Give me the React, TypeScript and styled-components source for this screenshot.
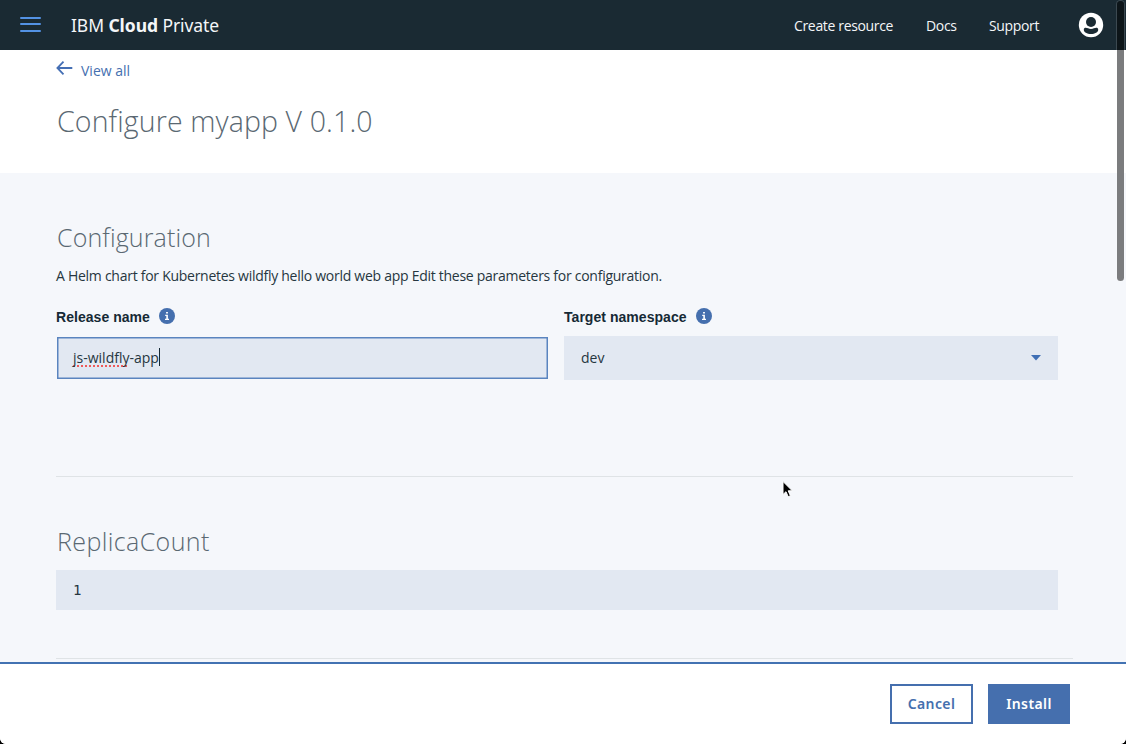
import React from 'react';
import styled, { createGlobalStyle } from 'styled-components';

const GlobalStyle = createGlobalStyle`
  * { box-sizing: border-box; }
  html, body { margin: 0; background: #000; overflow: hidden; }
  body { font-family: 'Open Sans', 'Noto Sans', sans-serif; font-size: 14px; color: #263640; }
  h1, h2, p { margin: 0; }
`;

const Page = styled.div`
  position: relative;
  display: flex;
  flex-direction: column;
  width: 1126px;
  height: 744px;
  overflow: hidden;
  background: #fff;
  border-radius: 0 0 6px 6px;
`;

const Header = styled.header`
  display: flex;
  align-items: center;
  flex: 0 0 50px;
  padding: 0 22px 0 20px;
  background: #1a2a33;
  color: #f4f6f8;
`;

const MenuButton = styled.div`
  width: 21px;
  height: 15px;
  margin: 0 30px 2px 0;
  display: flex;
  flex-direction: column;
  justify-content: space-between;
`;

const MenuBar = styled.span`
  height: 2px;
  border-radius: 1px;
  background: #5392e4;
`;

const Brand = styled.div`
  flex: 1;
  font-family: 'Noto Sans', sans-serif;
  font-size: 17.5px;
  white-space: pre;
  letter-spacing: -0.07px;
  b { font-weight: 700; }
`;

const Nav = styled.nav`
  display: flex;
  align-items: center;
`;

const NavLink = styled.a<{ $width: number; $gap: number }>`
  width: ${(p) => p.$width}px;
  margin-right: ${(p) => p.$gap}px;
  white-space: nowrap;
  font-size: 14px;
  letter-spacing: -0.34px;
`;

const TitleBand = styled.section`
  flex: 0 0 123px;
  padding: 10px 56px 0;
`;

const BackLink = styled.a`
  display: flex;
  align-items: center;
  height: 20px;
  gap: 8px;
  color: #4570b0;
  font-size: 14px;
  svg { margin-top: -4px; }
`;

const PageTitle = styled.h1`
  margin-top: 21px;
  padding-left: 1px;
  font-size: 28.5px;
  line-height: 40px;
  font-weight: 300;
  letter-spacing: 0.12px;
  color: #5a6872;
  white-space: nowrap;
`;

const Content = styled.main`
  flex: 1;
  min-height: 0;
  padding: 44px 53px 0 56px;
  background: #f5f7fb;
`;

const Section = styled.section<{ $height: number; $top: number }>`
  height: ${(p) => p.$height}px;
  padding-top: ${(p) => p.$top}px;
  border-bottom: 1px solid #dfe3e6;
`;

const SectionTitle = styled.h2<{ $spacing: number }>`
  padding-left: 1px;
  font-size: 25px;
  line-height: 40px;
  font-weight: 300;
  letter-spacing: ${(p) => p.$spacing}px;
  color: #5a6872;
`;

const Description = styled.p`
  margin-top: 9px;
  line-height: 20px;
  font-size: 14px;
  letter-spacing: -0.27px;
  white-space: nowrap;
`;

const Fields = styled.div`
  display: grid;
  grid-template-columns: 492px 494px;
  column-gap: 16px;
  margin-top: 21px;
`;

const Field = styled.div`
  display: flex;
  flex-direction: column;
`;

const Label = styled.label`
  display: flex;
  align-items: center;
  gap: 9px;
  height: 20px;
  margin-bottom: 9px;
  font-family: 'Liberation Sans', Arial, sans-serif;
  font-weight: 700;
  font-size: 14px;
  letter-spacing: 0.04px;
  color: #152935;
  svg { margin-top: -2px; }
`;

const TextBox = styled.div<{ $height: number }>`
  display: flex;
  align-items: center;
  height: ${(p) => p.$height}px;
  padding: 0 17px;
  background: #e2e8f2;
`;

const FocusedBox = styled(TextBox)`
  margin: 1px 0 0 1px;
  padding: 0 15px 2px;
  border: 1px solid #5a84bf;
  box-shadow: inset 0 0 0 0.5px #5a84bf;
`;

const ReplicaBox = styled(TextBox)`
  width: 1002px;
  margin-top: 9px;
  font-family: 'DejaVu Sans Mono', monospace;
`;

const Misspelled = styled.span`
  text-decoration: underline dotted #ee5a5a 2px;
  text-underline-offset: 3px;
  text-decoration-skip-ink: none;
`;

const Caret = styled.span`
  width: 1px;
  height: 18px;
  background: #152935;
`;

const SelectValue = styled.span`
  flex: 1;
  margin-top: -1px;
`;

const Footer = styled.footer`
  display: flex;
  flex: 0 0 82px;
  justify-content: flex-end;
  gap: 15px;
  padding: 20px 56px 0 0;
  background: #fff;
  border-top: 2px solid #4272b2;
`;

const Button = styled.button<{ $primary?: boolean; $width: number }>`
  width: ${(p) => p.$width}px;
  height: 40px;
  padding: 0 0 1px;
  border: 2px solid #456fae;
  background: ${(p) => (p.$primary ? '#456fae' : '#fff')};
  color: ${(p) => (p.$primary ? '#fff' : '#456fae')};
  font-family: 'Noto Sans', sans-serif;
  font-weight: 600;
  font-size: 14px;
  letter-spacing: 0.4px;
`;

const ScrollThumb = styled.div`
  position: absolute;
  top: 1px;
  right: 2px;
  width: 7px;
  height: 280px;
  border-radius: 4px;
  background: linear-gradient(#0d1519 49px, #7b7c7e 49px);
  box-shadow: 0 0 0 1px rgba(255, 255, 255, 0.15);
`;

const Pointer = styled.svg`
  position: absolute;
  left: 781px;
  top: 480px;
`;

const InfoIcon = () => (
  <svg width="16" height="16" viewBox="0 0 16 16">
    <circle cx="8" cy="8" r="8" fill="#456fae" />
    <path d="M6.2 6.8h2.7v4h1.1v1.1H6v-1.1h1.3V7.9H6.2zM7.1 4h1.8v1.6H7.1z" fill="#fff" />
  </svg>
);

export default function App() {
  return (
    <Page>
      <GlobalStyle />
      <Header>
        <MenuButton><MenuBar /><MenuBar /><MenuBar /></MenuButton>
        <Brand>IBM <b>Cloud</b> Private</Brand>
        <Nav>
          <NavLink $width={100} $gap={32}>Create resource</NavLink>
          <NavLink $width={31} $gap={32}>Docs</NavLink>
          <NavLink $width={51} $gap={38}>Support</NavLink>
          <svg width="26" height="26" viewBox="0 0 26 26">
            <circle cx="13" cy="13" r="12.2" fill="#fff" />
            <circle cx="13" cy="10" r="5" fill="#1a2a33" />
            <path d="M5.800 17.800c0-1.400.8-2 2-2 1.700 0 2.700 1.100 5.200 1.100s3.500-1.100 5.200-1.100c1.200 0 2 .6 2 2 0 2.600-3.200 4.200-7.200 4.200s-7.200-1.600-7.200-4.200z" fill="#1a2a33" />
          </svg>
        </Nav>
      </Header>
      <TitleBand>
        <BackLink>
          <svg width="17" height="14" viewBox="0 0 17 14" fill="none" stroke="#456fb4" strokeWidth="1.800">
            <path d="M16.300 7H1.400M7.500 0.700L1.400 7l6.100 6.300" />
          </svg>
          View all
        </BackLink>
        <PageTitle>Configure myapp V 0.1.0</PageTitle>
      </TitleBand>
      <Content>
        <Section $height={260} $top={0}>
          <SectionTitle $spacing={0.13}>Configuration</SectionTitle>
          <Description>A Helm chart for Kubernetes wildfly hello world web app Edit these parameters for configuration.</Description>
          <Fields>
            <Field>
              <Label>Release name <InfoIcon /></Label>
              <FocusedBox $height={42}><span><Misspelled>js-wildfly</Misspelled>-app</span><Caret /></FocusedBox>
            </Field>
            <Field>
              <Label>Target namespace <InfoIcon /></Label>
              <TextBox $height={44}>
                <SelectValue>dev</SelectValue>
                <svg width="10" height="6" viewBox="0 0 10 6"><path d="M0 0h10L5 5.500z" fill="#3f6fb5" /></svg>
              </TextBox>
            </Field>
          </Fields>
        </Section>
        <Section $height={182} $top={44}>
          <SectionTitle $spacing={0.4}>ReplicaCount</SectionTitle>
          <ReplicaBox $height={40}>1</ReplicaBox>
        </Section>
      </Content>
      <Footer>
        <Button $width={83}>Cancel</Button>
        <Button $primary $width={82}>Install</Button>
      </Footer>
      <ScrollThumb />
      <Pointer width="14" height="20" viewBox="0 0 14 20">
        <path d="M2 1.500v13l3-2.800 2.200 5 2.200-1-2.200-4.900h4.100z" fill="#000" stroke="#fff" strokeWidth="1" />
      </Pointer>
    </Page>
  );
}
